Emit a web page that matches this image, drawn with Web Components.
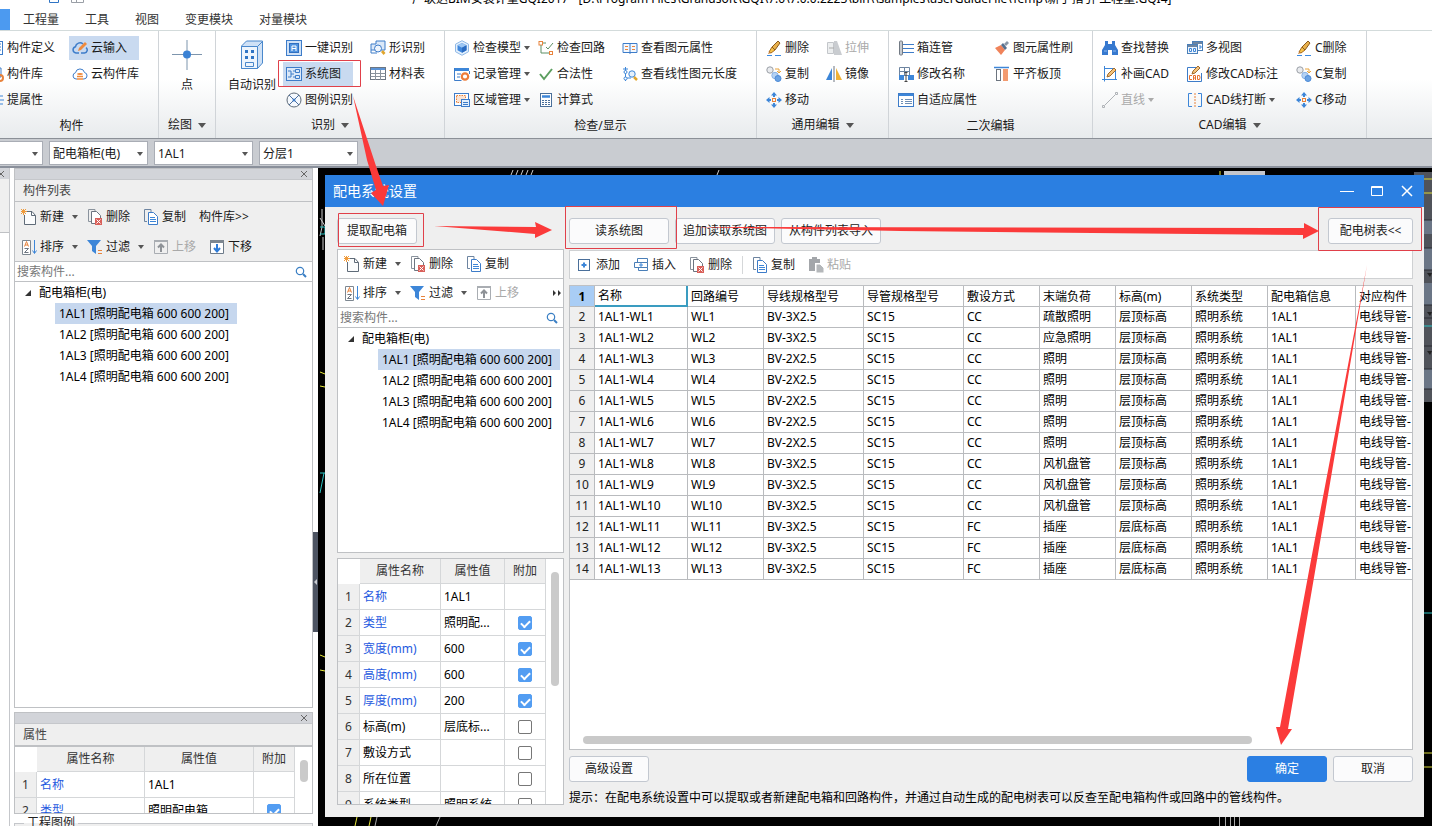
<!DOCTYPE html>
<html lang="zh-CN">
<head>
<meta charset="utf-8">
<title>配电系统设置</title>
<style>
html,body{margin:0;height:100%}
body{font:12px/16px "Noto Sans","Noto Sans CJK SC",sans-serif;color:#1a1a1a;background:#fff;overflow:hidden}
</style>
</head>
<body>
<cad-app></cad-app>
<script>
const S = (body) => `<svg width="16" height="16" viewBox="0 0 16 16" fill="none" stroke-width="1" aria-hidden="true">${body}</svg>`;
const eraser = '<path d="M1 15.500h5M9 15.500h6" stroke="#3d8be0"/><path d="M3 12l3-5 3 3-4 3z" fill="#f4c24a" stroke="#a9691b"/><path d="M6 7l6-6 2 2-5 7z" fill="#e8b04a" stroke="#8a5a20"/><path d="M3 12l-1 2 3-1z" fill="#c77a2a"/>';
const copyBalls = '<circle cx="4" cy="4" r="3.200" stroke="#9a9fa6" fill="#e9ebee"/><path d="M9 3h4v3M11 5l2 2 2-2" stroke="#e8a33c"/><circle cx="9" cy="9.500" r="3.200" fill="#b6d2f3" stroke="#8bb4e6"/><circle cx="12" cy="12.500" r="3" fill="#6ba3e4" stroke="#4c8ad6"/>';
const moveCross = '<path d="M8 0l3 3.500H5zM8 16l3-3.500H5zM0 8l3.500-3v6zM16 8l-3.500-3v6z" fill="#3d86d8"/><path d="M8 3v2M8 11v2M3 8h2M11 8h2" stroke="#3d86d8" stroke-width="2"/><rect x="6.500" y="6.500" width="3" height="3" stroke="#e8833c"/>';
const ICONS = {
  define:'<rect x=".5" y="1.500" width="14" height="13" stroke="#3d7cc9"/><path d="M8 4h5M8 7h5M8 10h5" stroke="#3d7cc9"/>',
  lib:'<path d="M1 2h12v9H1z" stroke="#3d7cc9"/><circle cx="12" cy="12" r="3" stroke="#e8833c" stroke-width="2"/>',
  lift:'<path d="M1 4h14M4 8h12M8 12h7" stroke="#3d86d8"/>',
  cloudEdit:'<path d="M7 13H4a3.200 3.200 0 0 1-.5-6.300A4.500 4.500 0 0 1 11 4" stroke="#3d7cc9" stroke-width="1.500"/><path d="M9 13h3.500a3 3 0 0 0 1.500-5.400" stroke="#3d7cc9" stroke-width="1.500"/><path d="M6 11l1-3 6-6 2 2-6 6z" fill="#f08a3c"/>',
  cloudLib:'<path d="M5 13H4a3.200 3.200 0 0 1-.5-6.300 4.600 4.600 0 0 1 9-.2A3.300 3.300 0 0 1 12 13h-1" stroke="#3d7cc9"/><ellipse cx="8" cy="8" rx="3" ry="1" fill="#f08a3c"/><path d="M5 10.500h6M5 13h6" stroke="#f08a3c" stroke-width="1.500"/>',
  auto1:'<rect x=".5" y=".5" width="15" height="15" stroke="#3d7cc9" fill="#cfe1f6"/><rect x="3.500" y="3.500" width="9" height="9" stroke="#2f6fc0" fill="#4f93e0"/><path d="M6 11V6h4v5M6 8.500h4" stroke="#fff"/>',
  system:'<rect x=".5" y="1.500" width="15" height="13" stroke="#3d7cc9" fill="#dbe8f8"/><path d="M2 5h3v6H2M5 8h3" stroke="#3d7cc9"/><path d="M9.500 3.500h4v3h-4zM9.500 9.500h4v3h-4zM7 5h2M7 11h2" stroke="#3d7cc9"/>',
  legend:'<circle cx="8" cy="8" r="7" stroke="#5f6b78" fill="#f5f9fe"/><path d="M3 3l10 10M13 3L3 13" stroke="#4a6fa0"/><circle cx="8" cy="8" r="1.500" fill="#3d7cc9"/>',
  shape:'<path d="M1 4h5V1h9v9H1z" fill="#dbe8f8" stroke="#3d7cc9"/><circle cx="8" cy="8.500" r="3.500" fill="#eef5fd" stroke="#3d7cc9"/><path d="M1 10v3h6" stroke="#3d7cc9"/><path d="M11 12l2-2 2.500 3-2 2z" fill="#e0a52c"/>',
  sheet:'<rect x=".5" y="1.500" width="15" height="12" stroke="#6c7682" fill="#fff"/><path d="M1 3h14" stroke="#5b93d6" stroke-width="2"/><path d="M.5 7.500h15M.5 10.500h15M5.500 4v10M10.500 4v10" stroke="#8a939d"/>',
  cube:'<path d="M8 .7l6.500 3.500v7.500L8 15.300 1.500 11.700V4.200z" stroke="#8fb8e6" fill="#e4f0fc"/><path d="M8 3l4.500 2.300v5L8 12.800l-4.500-2.500v-5z" fill="#3f87dc"/><path d="M8 3l4.500 2.300L8 7.700 3.500 5.300z" fill="#9cc6f3"/><path d="M8 7.700l4.500-2.400v5L8 12.800z" fill="#2a6bc0"/>',
  record:'<path d="M1 2h14v3H1z" fill="#3d86d8"/><path d="M.5 2v12.500h7M3 8h4M3 11h3M15.500 5v3" stroke="#3d7cc9"/><circle cx="11" cy="10.500" r="3.200" stroke="#ee7d3a" stroke-width="2.200" fill="#fff"/>',
  region:'<rect x=".5" y="1.500" width="14" height="12" stroke="#3d7cc9" fill="#fff"/><rect x="2.500" y="3.500" width="9" height="7" stroke="#e8833c" stroke-dasharray="1.500 1" fill="#fbe3d2"/><rect x="7.500" y="7.500" width="8" height="7" stroke="#3d7cc9" fill="#e4f0fc"/><path d="M9 10.500h5M9 12.500h5" stroke="#3d7cc9"/>',
  circuit:'<rect x="1" y="1.500" width="3.500" height="3.500" stroke="#e8833c"/><rect x="11.500" y="11.500" width="3" height="3" stroke="#e8833c"/><path d="M5 3h3M3 5v8h8M8 7l2 2 5-6" stroke="#5d8f65"/>',
  check:'<path d="M2 8l4 5 8-10" stroke="#5b9e5f" stroke-width="2"/>',
  calc:'<rect x="2.500" y="1.500" width="11" height="13" stroke="#4a6f9a" fill="#fff"/><path d="M4 4.500h8" stroke="#3d86d8" stroke-width="2.500"/><path d="M4 8.500h8M4 10.500h8M4 12.500h8" stroke="#4a6f9a" stroke-dasharray="2 1"/>',
  book:'<path d="M8 3.500H1v9h14v-9z" stroke="#3d7cc9" fill="#f3f8fe"/><path d="M8 3.500V14" stroke="#3d7cc9"/><path d="M3 6.500h3M3 9.500h3M10 6.500h3M10 9.500h3" stroke="#e8833c"/>',
  length:'<path d="M3.500 1v14M1 3h5" stroke="#3d86d8"/><circle cx="3.500" cy="6" r="1.500" fill="#fff" stroke="#3d86d8"/><circle cx="3.500" cy="12.500" r="1.500" fill="#fff" stroke="#3d86d8"/><path d="M5 12h4" stroke="#3d86d8"/><circle cx="10" cy="8" r="3.200" stroke="#3d86d8" fill="#e4f0fc"/><path d="M12 11l3 3" stroke="#e0a52c" stroke-width="2.500"/>',
  eraser, copyBalls, moveCross,
  stretch:'<path d="M1.500 2.500h6v11h-6z" fill="#eceeef" stroke="#c3c6ca"/><path d="M8 1h3l5 14H8z" fill="#c9ccd0"/><path d="M3 8h5" stroke="#aaa"/>',
  mirror:'<path d="M6 2v12H0z" fill="#3d86d8"/><path d="M10 2v12h6z" fill="#f0b136"/><path d="M8 0v16" stroke="#6d7580"/>',
  pipes:'<rect x="1.500" y="1" width="3" height="14" rx="1" fill="#c6cbd1" stroke="#727a84"/><path d="M5 4.500h11M5 8.500h11M5 12.500h11" stroke="#3d7cc9"/>',
  rename:'<path d="M1.500 1.500h10v8h-10zM6.500 1v9M1 5.500h10" stroke="#6d84a0"/><rect x="1" y="9" width="5" height="5" fill="#3d86d8"/><rect x="10" y="9" width="6" height="5" fill="#3d86d8"/><path d="M8 7v9M6.500 6.500h3M6.500 15.500h3" stroke="#444"/>',
  adapt:'<rect x=".5" y="1.500" width="15" height="13" stroke="#3d7cc9" fill="#fff"/><path d="M1 3h14" stroke="#3d86d8" stroke-width="2"/><path d="M3 7.500h2M3 9.500h2M3 11.500h2M7 7.500h7M7 9.500h7M7 11.500h7" stroke="#6f8fb5"/>',
  brush:'<path d="M1 8l6-3 4 5-4 5z" fill="#f0835a"/><path d="M7 5l2-2 4 5-2 2z" fill="#56708f"/><path d="M10 4l3-3 2 2-3 3z" fill="#8a97a8"/>',
  alignTop:'<path d="M0 1.500h15" stroke="#3d86d8" stroke-width="1.500"/><rect x="2.500" y="3.500" width="4" height="11" stroke="#6d7580"/><rect x="9" y="3" width="5" height="12" fill="#f39b70"/>',
  find:'<path d="M3 1h3v3h4V1h3v4l3 5v5h-6v-5H6v5H0v-5l3-5z" fill="#3779cf"/><path d="M2 11h3M11 11h3" stroke="#8fbaf0"/>',
  drawCad:'<path d="M2.500 0v15.500M0 13.500h15M2 2.500h9M13.500 5v9" stroke="#3d86d8"/><path d="M5 11l1-3 6-6 2 2-6 6z" fill="#f4c27a" stroke="#a06a2c"/>',
  line:'<path d="M3 13L13 3" stroke="#aeb2b6"/><path d="M.5 13.500h2v2h-2zM13.500.5h2v2h-2z" stroke="#aeb2b6"/>',
  views:'<rect x="5.500" y="1.500" width="10" height="9" stroke="#4a7fb8" fill="#fff"/><path d="M6 3h9" stroke="#6d84a0" stroke-width="2"/><rect x=".5" y="4.500" width="10" height="9" stroke="#4a7fb8" fill="#eef5fd"/><path d="M1 6h9" stroke="#6d84a0" stroke-width="2"/><path d="M2.500 8.500h2v3h-2zM6.500 8.500h2v3h-2zM12 6h2v2h-2" stroke="#3d86d8"/>',
  editCad:'<path d="M10 1.500H.5v14h14V7" stroke="#3d7cc9"/><path d="M5 8l1-3 5-5 2 2-5 5z" fill="#f4c27a" stroke="#a06a2c"/><path d="M5 9.500H2.500v4H5M6.500 14v-4.500h2V14M6.500 12h2M10.500 9.500v4h2l.5-2-.5-2z" stroke="#e8702c"/>',
  breakLine:'<path d="M5 1.500H1.500v13H5M11 1.500h3.500v13H11" stroke="#3d86d8"/><path d="M8 1v14" stroke="#e8833c" stroke-dasharray="2 1"/>',
  fresh:'<path d="M6 2.500h5l3.500 4v9h-11V6" stroke="#5f6b78" fill="#fbfcfd"/><path d="M10.500 2.500v4h4" stroke="#5f6b78"/><path d="M2.500 0v6M0 2.500h6M0 0l5 5M5 0L0 5" stroke="#ef9b3c"/>',
  remove:'<path d="M8 2V.5H1.500v12H4" stroke="#8a939d"/><path d="M4.500 2.500h5l4 4v8h-9z" stroke="#6d7580" fill="#fff"/><rect x="8" y="9" width="7" height="7" fill="#d9605a"/><path d="M9.500 10.500l4 4M13.500 10.500l-4 4" stroke="#fff"/>',
  dup:'<path d="M8 3V.5H1.500v12H4" stroke="#6d84a0"/><path d="M5.500 3.500h5l4 4v8h-9z" fill="#fff" stroke="#3d7cc9"/><path d="M7 8.500h5M7 10.500h6M7 12.500h6" stroke="#3d86d8"/>',
  sort:'<path d="M1.500 1.500h8v14h-8z" stroke="#7d8791" fill="#fff"/><path d="M3.500 7.500l2-5 2 5M4 6h3" stroke="#e8833c"/><path d="M3.500 9.500h4l-4 4h4" stroke="#6d7580"/><path d="M13.500 1v13M11.500 11.500l2 3 2-3" stroke="#3d86d8"/>',
  filter:'<path d="M0 1h14L9 7v8l-4-3V7z" fill="#3d86d8"/><path d="M11 11.500h4M11 14.500h4" stroke="#e8833c"/>',
  up:'<path d="M1.500 1.500h13v13h-13z" stroke="#a9adb2"/><path d="M1 2h14" stroke="#a9adb2" stroke-width="2"/><path d="M8 13V6M5 8.500l3-3 3 3" stroke="#8e9297" stroke-width="2"/>',
  down:'<path d="M1.500 1.500h13v13h-13z" stroke="#6d7b8a" fill="#fff"/><path d="M1 2.500h14" stroke="#7d8791" stroke-width="3"/><path d="M8 5v7M5 9l3 3.500L11 9" stroke="#2f7cd8" stroke-width="2"/>',
  add:'<rect x="1.500" y="2.500" width="11" height="11" stroke="#4a6f9a" fill="#fff"/><path d="M7 5.500v5M4.500 8h5" stroke="#3d86d8" stroke-width="2"/>',
  insert:'<path d="M4.500 1.500h10v4h-10zM5.500 10.500h9v3h-9z" stroke="#4a7fb8"/><path d="M1.500 5.500h13v5h-13z" fill="#fff" stroke="#4a7fb8"/><path d="M8 6v4M6 8h4" stroke="#3d86d8"/>',
  paste:'<path d="M1 2h3V0h5v2h3v4H7v8H1z" fill="#a3a6aa"/><path d="M8 7h4l4 4v5H8z" fill="#b4b7ba" stroke="#fff"/>',
  search:'<circle cx="7" cy="7" r="3.700" stroke="#3a7fc4" stroke-width="1.200"/><path d="M10 10l3 3" stroke="#3a7fc4" stroke-width="2"/>'
};
const define = (tag, css, html) => customElements.define(tag, class extends HTMLElement {
  constructor() {
    super();
    this.attachShadow({ mode: 'open' });
  }
  connectedCallback() {
    this.shadowRoot.innerHTML = `<style>*{box-sizing:border-box}button,input,select{font:inherit;color:inherit;margin:0}${css}</style>${typeof html === 'function' ? html(this) : html}`;
  }
});

define('tool-button', `
  :host{display:block;flex:none}
  :host(:not([caret])){padding-right:var(--tail,0px)}
  button{display:flex;align-items:center;gap:3px;width:100%;height:24px;padding:0 0 0 3px;border:0;background:none;white-space:nowrap;text-align:left}
  svg{flex:none}
  :host([active]) button{background:#c9daf0}
  button:disabled{color:#a9a9a9}
  i{flex:none;margin-left:var(--caret-gap,0px);border:3px solid transparent;border-top:4px solid #555;border-bottom:0}
  button:disabled i{border-top-color:#aaa}`,
  el => `<button type="button" ${el.hasAttribute('off') ? 'disabled' : ''}>${el.getAttribute('icon') ? S(ICONS[el.getAttribute('icon')]) : ''}<span><slot></slot></span>${el.hasAttribute('caret') ? '<i></i>' : ''}</button>`);

define('tool-column', `:host{display:flex;flex-direction:column;gap:2px;flex:none;padding-top:1px}`, '<slot></slot>');

define('big-tool', `
  :host{display:block;flex:none}
  button{display:flex;flex-direction:column;align-items:center;gap:6px;padding:4px 0 0;border:0;background:none;white-space:nowrap}
  svg{display:block}`,
  el => `<button type="button">${el.getAttribute('icon') === 'point'
    ? '<svg width="30" height="32" viewBox="0 0 30 32" fill="none"><path d="M15 1v30M0 15.500h30" stroke="#7d95ad"/><circle cx="15" cy="15.500" r="4" fill="#3b82d4"/></svg>'
    : '<svg width="24" height="32" viewBox="0 0 24 32" fill="none"><path d="M1.500 7l5-5h16v22l-5 5.500h-16z" fill="#cfe1f6" stroke="#4a88cc"/><path d="M1.500 7.500h16v22h-16z" fill="#eef5fd" stroke="#4a88cc"/><path d="M17.500 7.500l5-5" stroke="#4a88cc"/><path d="M5 11h3v3H5zM11 11h3v3h-3zM5 17h3v3H5zM11 17h3v3h-3z" fill="#2f74c4"/><path d="M5.500 23.500h8v4h-8z" stroke="#4a88cc"/></svg>'}<span><slot></slot></span></button>`);

define('ribbon-group', `
  :host{display:flex;flex-direction:column;flex:none;width:var(--w);border-right:1px solid #d0d4d8;padding:4px 0 2px}
  .tools{display:flex;height:80px;padding-left:var(--pad,6px)}
  .name{display:flex;justify-content:center;align-items:center;gap:6px;height:21px;white-space:nowrap}
  :host([caret]) .name{height:22px}
  i{border:4px solid transparent;border-top:5px solid #555;border-bottom:0}`,
  el => `<div class="tools"><slot></slot></div><div class="name"><span>${el.getAttribute('label')}</span>${el.hasAttribute('caret') ? '<i></i>' : ''}</div>`);

const tb = (icon, text, flags = '') => `<tool-button icon="${icon}" ${flags}>${text}</tool-button>`;

define('app-ribbon', `
  :host{display:flex;height:108px;border-top:1px solid #d3dbdb;background:linear-gradient(#fff 45%,#e8ebed);overflow:hidden}
  ribbon-group:first-of-type{margin-left:-15px}`,
  `<ribbon-group label="构件" style="--w:174px;--pad:0px">
    <tool-column style="width:84px">${tb('define','构件定义')}${tb('lib','构件库')}${tb('lift','提属性')}</tool-column>
    <tool-column style="width:70px">${tb('cloudEdit','云输入','active')}${tb('cloudLib','云构件库')}</tool-column>
  </ribbon-group>
  <ribbon-group label="绘图" caret style="--w:57px;--pad:13px"><big-tool icon="point">点</big-tool></ribbon-group>
  <ribbon-group label="识别" caret style="--w:229px;--pad:12px"><big-tool icon="auto">自动识别</big-tool>
    <tool-column style="width:70px;margin-left:7px">${tb('auto1','一键识别')}${tb('system','系统图','active')}${tb('legend','图例识别')}</tool-column>
    <tool-column style="margin-left:14px">${tb('shape','形识别')}${tb('sheet','材料表')}</tool-column>
  </ribbon-group>
  <ribbon-group label="检查/显示" style="--w:312px">
    <tool-column style="width:84px">${tb('cube','检查模型','caret')}${tb('record','记录管理','caret')}${tb('region','区域管理','caret')}</tool-column>
    <tool-column style="width:84px">${tb('circuit','检查回路')}${tb('check','合法性')}${tb('calc','计算式')}</tool-column>
    <tool-column>${tb('book','查看图元属性')}${tb('length','查看线性图元长度')}</tool-column>
  </ribbon-group>
  <ribbon-group label="通用编辑" caret style="--w:132px">
    <tool-column style="width:60px">${tb('eraser','删除')}${tb('copyBalls','复制')}${tb('moveCross','移动')}</tool-column>
    <tool-column>${tb('stretch','拉伸','off')}${tb('mirror','镜像')}</tool-column>
  </ribbon-group>
  <ribbon-group label="二次编辑" style="--w:204px">
    <tool-column style="width:96px">${tb('pipes','箱连管')}${tb('rename','修改名称')}${tb('adapt','自适应属性')}</tool-column>
    <tool-column>${tb('brush','图元属性刷')}${tb('alignTop','平齐板顶')}</tool-column>
  </ribbon-group>
  <ribbon-group label="CAD编辑" caret style="--w:274px">
    <tool-column style="width:85px">${tb('find','查找替换')}${tb('drawCad','补画CAD')}${tb('line','直线','off caret')}</tool-column>
    <tool-column style="width:109px">${tb('views','多视图')}${tb('editCad','修改CAD标注')}${tb('breakLine','CAD线打断','caret')}</tool-column>
    <tool-column>${tb('eraser','C删除')}${tb('copyBalls','C复制')}${tb('moveCross','C移动')}</tool-column>
  </ribbon-group>`);

define('app-header', `
  :host{display:block}
  .title{display:flex;height:9px;overflow:hidden;padding-left:412px;white-space:nowrap;color:#000}
  .title span{margin-top:-9px}
  .quick{position:absolute;left:48px;top:0}
  nav{display:flex;gap:26px;height:21px;align-items:center}
  nav b{width:10px;height:21px;margin-right:-13px;background:#4c9af0}
  a{color:#333;text-decoration:none}`,
  `<div class="title"><span>广联达BIM安装计量GQI2017 - [D:\\Program Files\\Grandsoft\\GQI\\7.0\\7.0.0.2223\\bin\\\\samples\\userGuideFile\\Temp\\新手指引-工程量.GQI4]</span></div>
  <svg class="quick" width="38" height="4" viewBox="0 0 38 4" fill="none" aria-hidden="true"><path d="M1.500 0v2.500h9V0" stroke="#2f74c4"/><path d="M23.500 0v2.500h12V0M28.500 0v2" stroke="#9a9fa6"/></svg>
  <nav><b></b><a href="#q">工程量</a><a href="#t">工具</a><a href="#v">视图</a><a href="#c">变更模块</a><a href="#d">对量模块</a></nav>`);

define('pick-list', `
  :host{display:block;position:relative;flex:none;width:99px}
  select{width:100%;height:24px;padding:2px 16px 0 3px;border:1px solid #a9adb5;border-radius:0;background:#fff;appearance:none}
  i{position:absolute;right:5px;top:11px;border:3px solid transparent;border-top:4px solid #555;border-bottom:0;pointer-events:none}`,
  el => `<select aria-label="${el.getAttribute('name')}"><option>${el.getAttribute('value')}</option></select><i></i>`);

define('context-bar', `
  :host{display:flex;gap:6px;height:30px;align-items:center;border-top:1px solid #8b9097;border-bottom:2px solid #8a909b;background:#c9ccd1}
  pick-list:first-of-type{margin-left:-56px}`,
  `<pick-list name="楼层" value=""></pick-list><pick-list name="构件类型" value="配电箱柜(电)"></pick-list><pick-list name="构件" value="1AL1"></pick-list><pick-list name="分层" value="分层1"></pick-list>`);

define('search-field', `
  :host{display:flex;align-items:center;height:20px;background:#fff;border-bottom:1px solid #bfc1c4;flex:none}
  input{flex:1;min-width:0;border:0;padding:0 2px;outline:0;background:none;height:18px}
  input::placeholder{color:#777;opacity:1}
  button{border:0;background:none;padding:0 3px 0 0;height:16px}svg{display:block}`,
  `<input type="text" aria-label="搜索构件" placeholder="搜索构件..."><button type="button" aria-label="搜索">${S(ICONS.search)}</button>`);

define('component-tree', `
  :host{display:block;flex:1;min-height:0;background:#fff;color:#000}
  ul{list-style:none;margin:0;padding:0}
  .root{display:flex;align-items:center;height:21px;padding-left:10px;gap:8px}
  li li{margin-left:40px;height:21px;line-height:21px}
  li li span{display:inline-block;padding-left:4px;width:182px;white-space:nowrap}
  .on{background:#c6d7ee}`,
  `<ul><li><div class="root"><svg width="6" height="6" viewBox="0 0 6 6"><path d="M6 0v6H0z" fill="#333"/></svg><span>配电箱柜(电)</span></div>
   <ul>${[1,2,3,4].map(n => `<li><span class="${n === 1 ? 'on' : ''}">1AL${n} [照明配电箱 600 600 200]</span></li>`).join('')}</ul></li></ul>`);

const PROPS = [['名称','1AL1',null,1],['类型','照明配...',true,1],['宽度(mm)','600',true,1],['高度(mm)','600',true,1],['厚度(mm)','200',true,1],['标高(m)','层底标...',false],['敷设方式','',false],['所在位置','',false],['系统类型','照明系统',false]];
define('property-grid', `
  :host{display:flex;overflow:hidden;background:#fff;min-height:0}
  table{border-collapse:separate;border-spacing:0;table-layout:fixed;width:calc(100% - var(--track));height:0;flex:none;color:#000}
  th,td{height:26px;padding:0 3px;border-right:1px solid #d5d7d9;border-bottom:1px solid #d5d7d9;font-weight:400;text-align:left;white-space:nowrap;overflow:hidden}
  thead th{height:25px;background:#efefef;text-align:center;color:#333}
  thead td{border-color:transparent #d5d7d9 transparent transparent;height:25px;border-right:0}
  tbody th{background:#efefef;text-align:center;color:#333;padding:0}
  .link{color:#1f5ae0}
  .tick{text-align:center;padding:0}
  input{appearance:none;display:block;width:14px;height:14px;margin:0 auto;border:1px solid #777;border-radius:2px;background:#fff}
  input:checked{background:#539df2;border-color:#539df2}
  input:checked::after{content:"";display:block;width:7px;height:4px;margin:3px auto 0;border:solid #fff;border-width:0 0 2px 2px;transform:rotate(-45deg)}
  .bar{flex:none;width:8px;height:var(--thumb);margin:13px 0 0 5px;border-radius:4px;background:#cacaca}`,
  el => {
    const [n, a, b, c] = el.getAttribute('cols').split(' ');
    const rows = PROPS.slice(0, +el.getAttribute('rows'));
    const wide = el.hasAttribute('wide');
    return `<table><colgroup><col style="width:${n}px"><col style="width:${a}${a === 'auto' ? '' : 'px'}"><col style="width:${b}px"><col style="width:${c}px"></colgroup>
    <thead><tr><td></td><th scope="col">属性名称</th><th scope="col">属性值</th><th scope="col">附加</th></tr></thead><tbody>
    ${rows.map((r, i) => `<tr><th scope="row">${i + 1}</th><td class="${r[3] ? 'link' : ''}">${r[0]}</td><td>${wide && i === 1 ? '照明配电箱' : r[1]}</td><td class="tick">${r[2] === null ? '' : `<input type="checkbox" aria-label="${r[0]}附加" ${r[2] ? 'checked' : ''}>`}</td></tr>`).join('')}
    </tbody></table><div class="bar"></div>`;
  });

define('dock-panel', `
  :host{display:flex;flex-direction:column;border:1px solid #bfc1c4;background:#efefef;min-height:0;overflow:hidden}
  .grip{display:flex;justify-content:flex-end;align-items:center;height:11px;flex:none;background:#d2d4d9;padding-right:5px;border-bottom:1px solid #c5c7cb}
  .grip button{display:block;border:0;background:none;padding:0}
  svg{display:block}
  h2{margin:0;height:22px;padding:2px 8px;flex:none;font:inherit;line-height:18px;color:#444;border-bottom:1px solid #bfc1c4}`,
  el => `<div class="grip"><button type="button" aria-label="关闭"><svg width="6" height="6" viewBox="0 0 6 6"><path d="M0 0l6 6M6 0L0 6" stroke="#666"/></svg></button></div><h2>${el.getAttribute('heading') || ''}</h2><slot></slot>`);

define('tool-strip', `
  :host{display:flex;align-items:center;gap:6px;height:29px;flex:none;padding-left:var(--lead,3px);--caret-gap:5px;--tail:4px}
  ::slotted(.end){margin-left:auto}`, '<slot></slot>');

define('side-dock', `
  :host{display:flex;flex:none;width:318px;background:#fff;min-height:0}
  .sliver{width:10px;flex:none;background:#fff;border-right:1px solid #c5c7cb;overflow:hidden}
  .sliver div{height:54px;background:#efefef;border-bottom:1px solid #bfc1c4}
  .sliver svg{display:block;background:#d2d4d9}
  .main{flex:1;min-width:0;display:flex;flex-direction:column;padding-left:4px}
  .upper{flex:1}
  .rows{display:grid;row-gap:1px;border-bottom:1px solid #bfc1c4}
  .lower{height:102px;flex:none;margin-top:4px}
  property-grid{flex:1;border-top:1px solid #bfc1c4}
  fieldset{margin:0;border:1px solid #c5c7cb;border-bottom:0;height:12px;padding:0;background:#efefef;overflow:hidden;flex:none;min-width:0}
  legend{margin-left:9px;padding:0 3px;line-height:18px;color:#222}
  .split{width:5px;flex:none;display:flex;flex-direction:column;justify-content:flex-end;padding-bottom:194px}
  .split div{height:100px;background:#4d5462;display:flex;align-items:center}`,
  `<div class="sliver"><svg width="10" height="11" viewBox="0 0 10 11"><path d="M-2 3l6 6M4 3l-6 6" stroke="#666"/></svg><div></div></div>
  <div class="main">
    <dock-panel class="upper" heading="构件列表">
      <div class="rows">
        <tool-strip>${tb('fresh','新建','caret')}${tb('remove','删除')}${tb('dup','复制')}${tb('','构件库&gt;&gt;')}</tool-strip>
        <tool-strip>${tb('sort','排序','caret')}${tb('filter','过滤','caret')}${tb('up','上移','off')}${tb('down','下移')}</tool-strip>
      </div>
      <search-field></search-field>
      <component-tree></component-tree>
    </dock-panel>
    <dock-panel class="lower" heading="属性"><property-grid wide rows="2" cols="22 auto 109 41" style="--track:17px;--thumb:22px"></property-grid></dock-panel>
    <fieldset><legend>工程图例</legend></fieldset>
  </div>
  <div class="split"><div><svg width="5" height="8" viewBox="0 0 5 8"><path d="M4 1L1 4l3 3z" fill="#c9ccd1"/></svg></div></div>`);

define('push-button', `
  :host{display:block;flex:none;width:var(--w,80px)}
  button{width:100%;height:26px;padding:0;border:1px solid #c3c8d0;border-radius:3px;background:#fbfbfc;color:#222;white-space:nowrap}
  :host([primary]) button{background:#2b7fe3;border-color:#2b7fe3;color:#fff}`,
  '<button type="button"><slot></slot></button>');

const HEAD = ['名称','回路编号','导线规格型号','导管规格型号','敷设方式','末端负荷','标高(m)','系统类型','配电箱信息','对应构件'];
const LOADS = ['疏散照明','应急照明','照明','照明','照明','照明','照明','风机盘管','风机盘管','风机盘管','插座','插座','插座'];
const CIRCUITS = LOADS.map((load, i) => [`1AL1-WL${i + 1}`, `WL${i + 1}`, [2,3,4,5,6].includes(i) ? 'BV-2X2.5' : 'BV-3X2.5', 'SC15', i > 9 ? 'FC' : 'CC', load, i > 9 ? '层底标高' : '层顶标高', '照明系统', '1AL1', '电线导管-']);
define('circuit-grid', `
  :host{display:flex;flex-direction:column;background:#fff;border:1px solid #bfc1c4;overflow:hidden;min-height:0;color:#000}
  .view{flex:1;overflow:hidden;min-height:0}
  table{border-collapse:separate;border-spacing:0;table-layout:fixed;width:922px}
  th,td{height:21px;padding:0 3px;border-right:1px solid #b9bbbe;border-bottom:1px solid #b9bbbe;font-weight:400;text-align:left;white-space:nowrap;overflow:hidden;line-height:20px}
  tr>:first-child{background:#efefef;text-align:center;padding:0;color:#222}
  thead th{line-height:19px}
  thead tr>:first-child{background:#a9cdf5;font-weight:700;color:#000}
  thead tr>:nth-child(2){border-right:2px solid #3a9cc0;border-bottom:2px solid #3a9cc0}
  .bar{flex:none;height:8px;width:669px;max-width:80%;margin:0 0 5px 13px;border-radius:4px;background:#c9c9c9}`,
  `<div class="view"><table><colgroup>${[25,93,76,100,100,76,76,76,76,88,136].map(w => `<col style="width:${w}px">`).join('')}</colgroup>
  <thead><tr><th scope="row">1</th>${HEAD.map(h => `<th scope="col">${h}</th>`).join('')}</tr></thead>
  <tbody>${CIRCUITS.map((r, i) => `<tr><th scope="row">${i + 2}</th>${r.map(c => `<td>${c}</td>`).join('')}</tr>`).join('')}</tbody></table></div><div class="bar"></div>`);

define('system-dialog', `
  :host{display:flex;flex-direction:column;background:#efefef;color:#222}
  header{display:flex;align-items:center;height:32px;flex:none;background:#2b7fe1;color:#fff;padding:0 10px 0 8px}
  h1{flex:1;margin:0;font:14px/20px "Noto Sans","Noto Sans CJK SC",sans-serif}
  header button{display:block;border:0;background:none;padding:0;margin-left:16px}
  header svg{display:block}
  main{flex:1;min-height:0;display:grid;grid-template-columns:227px minmax(0,1fr);column-gap:5px;padding:11px 11px 0 12px}
  .left,.right{display:flex;flex-direction:column;min-height:0;min-width:0}
  .row{display:flex;gap:6px;flex:none;height:26px}
  .row .end{margin-left:auto}
  .box{display:flex;flex-direction:column;border:1px solid #bfc1c4;background:#fff;flex:1;min-height:0;margin-top:5px}
  .box tool-strip{border-bottom:1px solid #bfc1c4}
  .left property-grid{height:247px;flex:none;margin:5px 0 12px;border:1px solid #bfc1c4}
  .right>tool-strip{--lead:4px;border:1px solid #cfd1d3;background:#fff;margin:6px 0 6px}
  .rule{width:1px;height:18px;background:#d5d7d9}
  circuit-grid{flex:1}
  .foot{margin-top:6px}
  p{margin:6px 0 10px;line-height:19px;color:#000;white-space:nowrap}`,
  `<header><h1>配电系统设置</h1>
    <button type="button" aria-label="最小化"><svg width="14" height="14" viewBox="0 0 14 14"><path d="M0 7.500h14" stroke="#fff"/></svg></button>
    <button type="button" aria-label="最大化"><svg width="14" height="14" viewBox="0 0 14 14" fill="none"><path d="M1.500 2.500h11v9h-11zM1 3.500h12" stroke="#fff"/></svg></button>
    <button type="button" aria-label="关闭"><svg width="14" height="14" viewBox="0 0 14 14"><path d="M2 2l10 10M12 2L2 12" stroke="#fff" stroke-width="1.500"/></svg></button>
  </header>
  <main>
    <section class="left">
      <div class="row"><push-button>提取配电箱</push-button></div>
      <div class="box">
        <tool-strip>${tb('fresh','新建','caret')}${tb('remove','删除')}${tb('dup','复制')}</tool-strip>
        <tool-strip>${tb('sort','排序','caret')}${tb('filter','过滤','caret')}${tb('up','上移','off')}<svg class="end" width="12" height="8" viewBox="0 0 12 8"><path d="M2 1l3 3-3 3zM7 1l3 3-3 3z" fill="#333"/></svg></tool-strip>
        <search-field></search-field>
        <component-tree></component-tree>
      </div>
      <property-grid rows="9" cols="22 auto 64 41" style="--track:17px;--thumb:114px"></property-grid>
    </section>
    <section class="right">
      <div class="row"><push-button style="--w:100px">读系统图</push-button><push-button style="--w:100px">追加读取系统图</push-button><push-button style="--w:100px">从构件列表导入</push-button><push-button class="end" style="--w:85px">配电树表&lt;&lt;</push-button></div>
      <tool-strip>${tb('add','添加')}${tb('insert','插入')}${tb('remove','删除')}<span class="rule"></span>${tb('dup','复制')}${tb('paste','粘贴','off')}</tool-strip>
      <circuit-grid></circuit-grid>
      <div class="row foot"><push-button>高级设置</push-button><push-button class="end" primary>确定</push-button><push-button>取消</push-button></div>
      <p>提示：在配电系统设置中可以提取或者新建配电箱和回路构件，并通过自动生成的配电树表可以反查至配电箱构件或回路中的管线构件。</p>
    </section>
  </main>`);

define('drawing-area', `
  :host{display:block;position:relative;flex:1;min-width:0;background:#000;overflow:hidden}
  svg{position:absolute}
  .l{left:0;top:0}.r{right:0;top:0}.b{left:0;bottom:0}
  system-dialog{position:absolute;top:7px;right:8px;bottom:9px;left:7px}`,
  `<svg class="l" width="420" height="600" viewBox="0 0 420 600" fill="none" aria-hidden="true"><path d="M193 7l2-5M198 7l2-5M203 7l2-5M208 7l2-5M213 7l2-5M399 7l2-5" stroke="#ccc"/><path d="M4 41v18l-2 9M2 50l5 8M5 69v13" stroke="#ccc"/><path d="M2 59h5v7H2M6 305l-4 20M2 305h5" stroke="#2bc4c4"/><path d="M2 204l5 2M2 218l5 1M2 487l5 2M2 502l5 1" stroke="#e8e83a"/></svg>
  <svg class="r" width="216" height="658" viewBox="0 0 216 658" fill="none" aria-hidden="true"><path d="M4 3v4" stroke="#e8e83a"/><path d="M8 3h41v4H8z" fill="#c4c6cc"/><path d="M198 4h18v230h-18z" fill="#50535a"/><path d="M208 52h8v14h-8zM208 80h8v22h-8zM208 115h8v22h-8zM208 201h8v20h-8z" fill="#6b7686"/><path d="M208 52h8M208 80h8M208 102h8M208 137h8M208 150h8M208 178h8M208 201h8M208 221h8" stroke="#2a2d33"/><path d="M211 105h5l-2 4zM211 144h5l-2 4zM211 183h5l-2 4z" fill="#222"/><path d="M208 11h8M208 25h8M208 585h8M208 599h8" stroke="#d8d83a"/><path d="M208 158h8M208 445h8" stroke="#2bc4c4"/></svg>
  <svg class="b" width="940" height="9" viewBox="0 0 940 9" fill="none" aria-hidden="true"><path d="M37 9l2-9M51 9l2-9" stroke="#e8e83a"/><path d="M57 9l2-9M118 9l4-9M901.500 0v9M907.500 0v9M912.500 0v9M916.500 0v9M921.500 0v9" stroke="#aaa"/></svg>
  <system-dialog></system-dialog>`);

define('guide-marks', `
  :host{display:block;position:absolute;left:0;top:0;pointer-events:none}
  svg{display:block}`,
  `<svg width="1432" height="826" viewBox="0 0 1432 826" fill="none" aria-hidden="true">
    <g stroke="#e0404a"><path d="M278.500 60.500h82v26h-82zM338.500 213.500h85v33h-85zM565.500 206.500h111v42h-111zM1318.500 207.500h103v43h-103z"/></g>
    <g fill="#fb3a3a"><path d="M353 96L376 166 383 186 389 185 383 206 371 193 376 190 367 160z"/><path d="M434 226L536 227 535 222 552 230 535 238 535 234z"/><path d="M690 227L1304 228 1304 223 1319 231 1303 239 1303 235 900 231z"/><path d="M1367 265L1317 560 1288 729 1292 729 1281 745 1276 727 1280 727 1311 560z"/></g>
  </svg>`);

define('cad-app', `
  :host{display:flex;flex-direction:column;position:relative;height:100vh;min-height:600px;overflow:hidden}
  app-header,app-ribbon,context-bar{flex:none}
  .work{flex:1;min-height:0;display:flex}`,
  `<app-header></app-header><app-ribbon></app-ribbon><context-bar></context-bar>
  <div class="work"><side-dock></side-dock><drawing-area></drawing-area></div>
  <guide-marks></guide-marks>`);
</script>
</body>
</html>
